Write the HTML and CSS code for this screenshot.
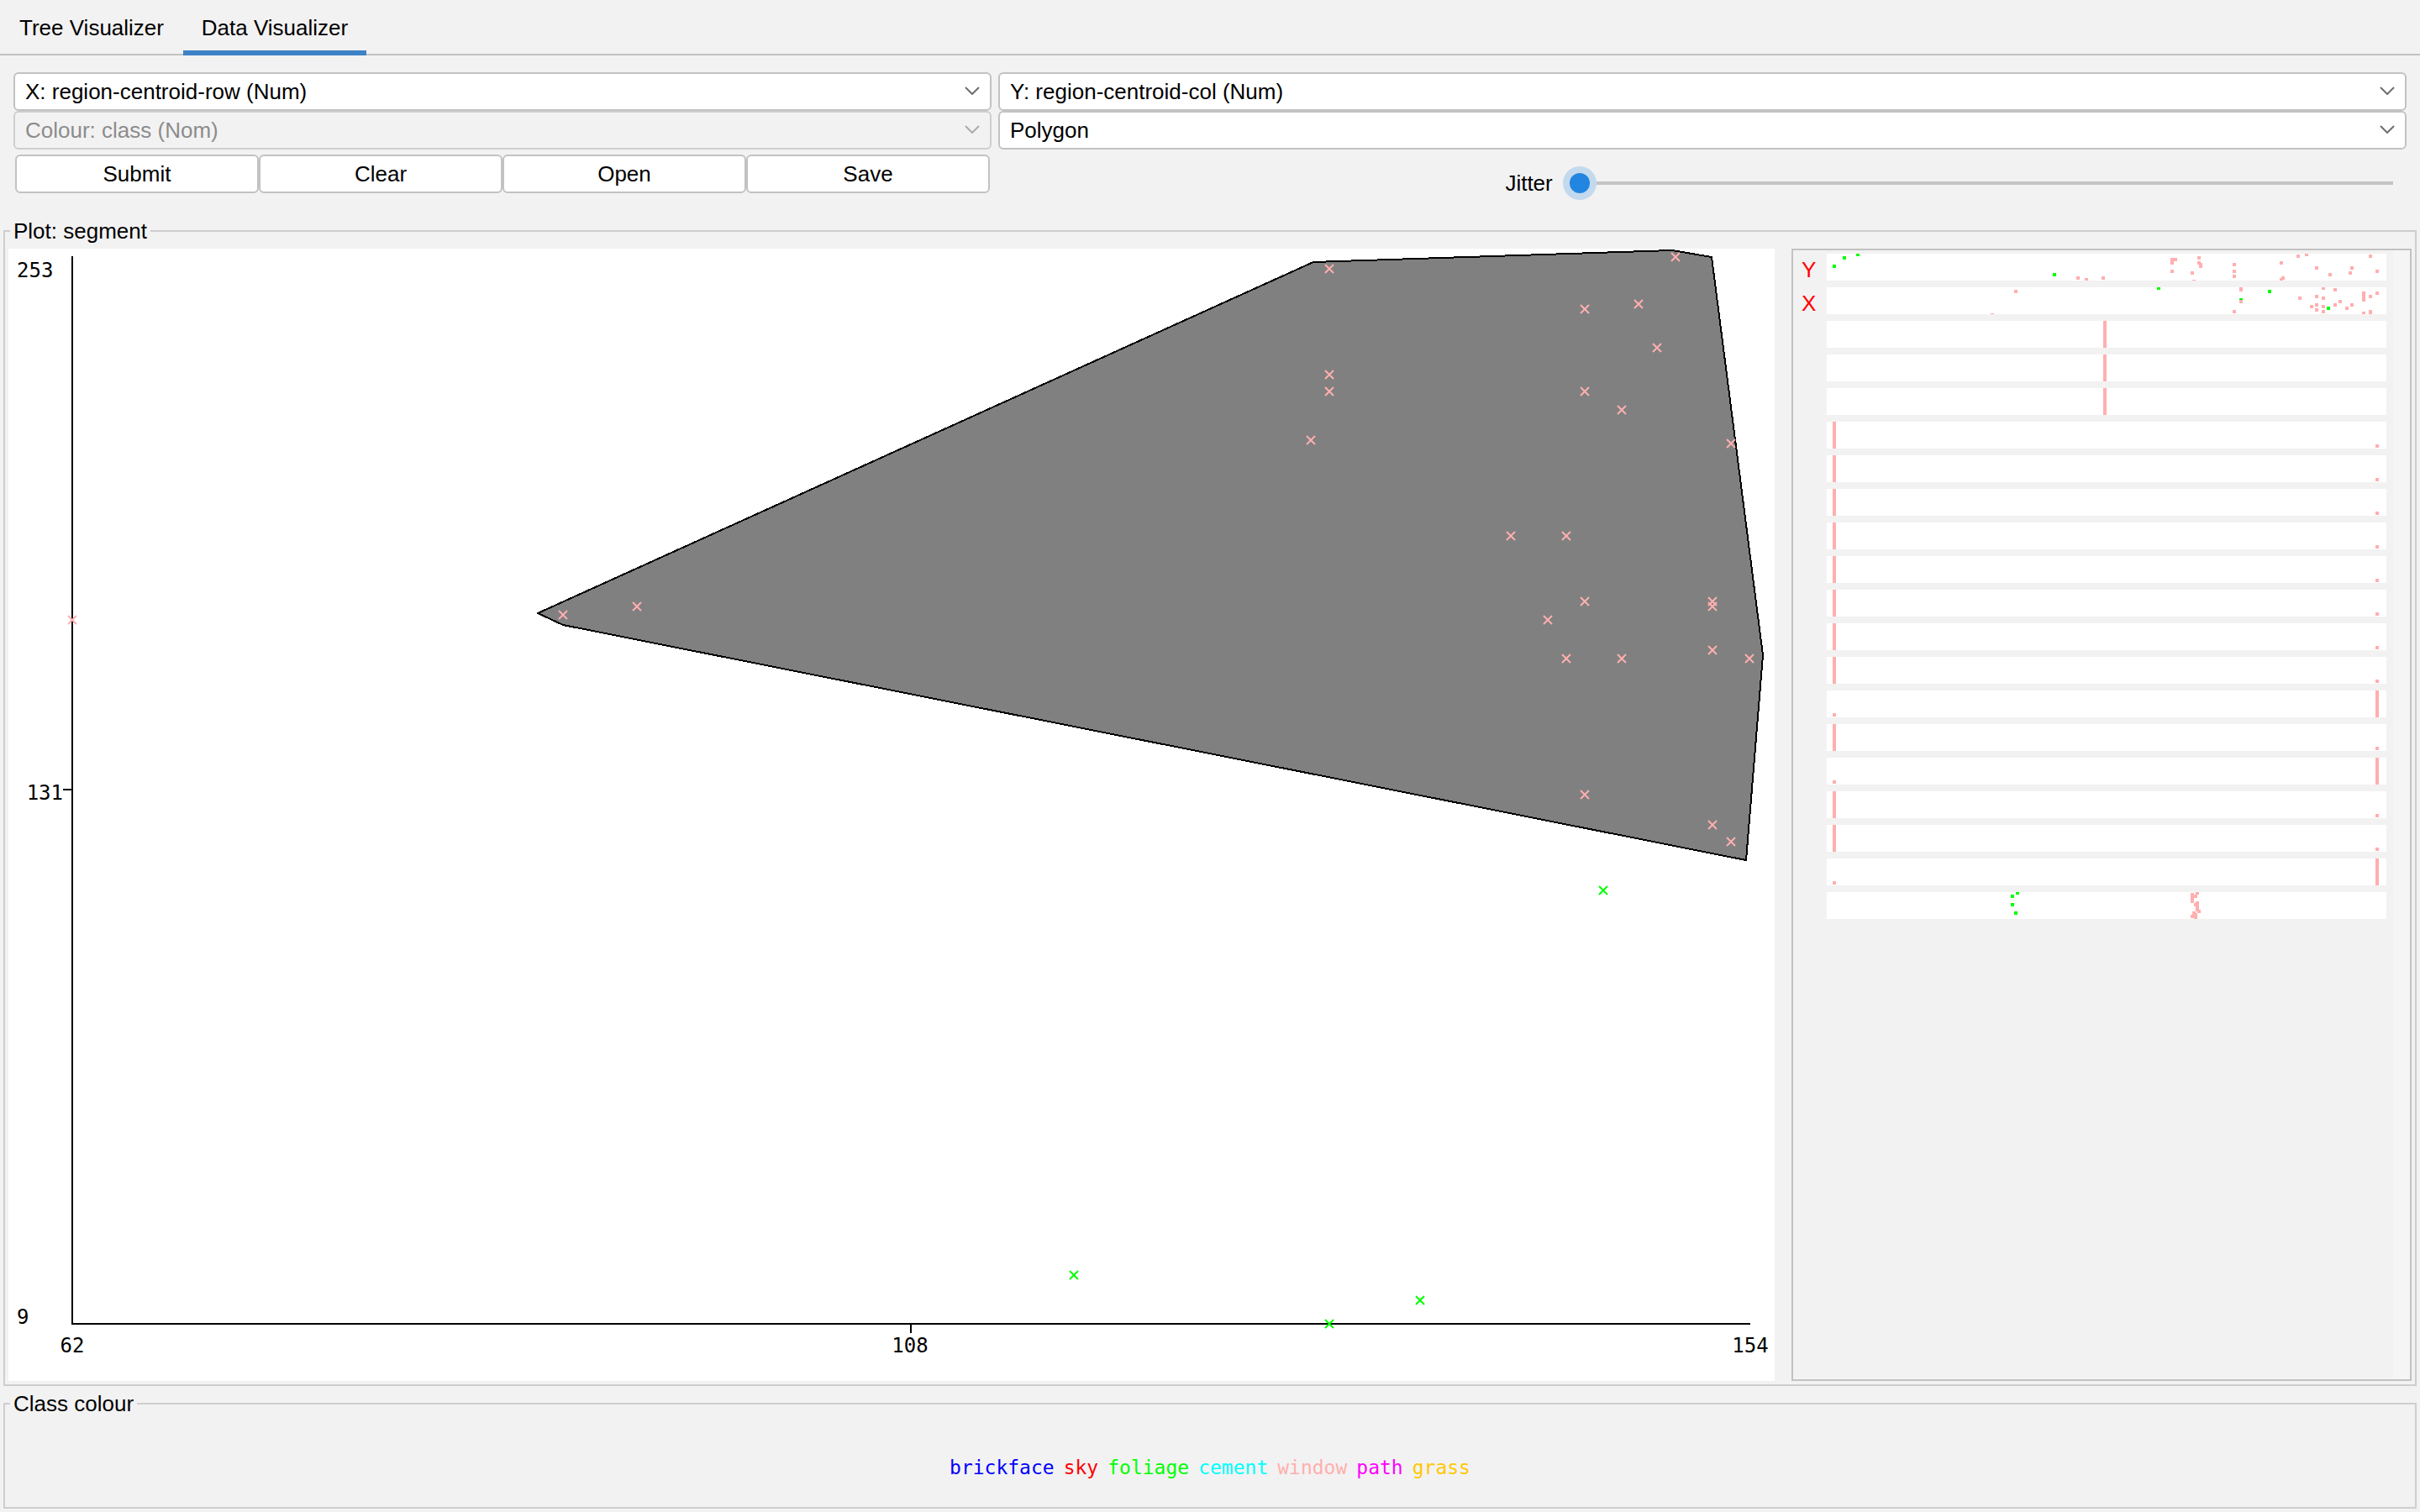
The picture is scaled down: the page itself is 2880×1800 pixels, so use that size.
FILE: index.html
```html
<!DOCTYPE html>
<html lang="en">
<head>
<meta charset="utf-8">
<title>Data Visualizer</title>
<link rel="stylesheet" href="styles.css">
</head>
<body>
<nav class="tabs" role="tablist">
  <button class="tab" role="tab" aria-selected="false">Tree Visualizer</button>
  <button class="tab tab-active" role="tab" aria-selected="true">Data Visualizer</button>
</nav>

<main>
  <form class="controls">
    <div class="control-column">
      <div class="combo">
        <select aria-label="X axis attribute"><option>X: region-centroid-row (Num)</option></select>
        <svg class="chevron" viewBox="0 0 18 10"><path d="M1 1l8 8 8-8"/></svg>
      </div>
      <div class="combo combo-disabled">
        <select aria-label="Colour attribute" disabled><option>Colour: class (Nom)</option></select>
        <svg class="chevron" viewBox="0 0 18 10"><path d="M1 1l8 8 8-8"/></svg>
      </div>
      <div class="buttons">
        <button type="button">Submit</button>
        <button type="button">Clear</button>
        <button type="button">Open</button>
        <button type="button">Save</button>
      </div>
    </div>
    <div class="control-column">
      <div class="combo">
        <select aria-label="Y axis attribute"><option>Y: region-centroid-col (Num)</option></select>
        <svg class="chevron" viewBox="0 0 18 10"><path d="M1 1l8 8 8-8"/></svg>
      </div>
      <div class="combo">
        <select aria-label="Selection shape"><option>Polygon</option></select>
        <svg class="chevron" viewBox="0 0 18 10"><path d="M1 1l8 8 8-8"/></svg>
      </div>
      <div class="jitter">
        <label for="jitter">Jitter</label>
        <input type="range" id="jitter" min="0" max="50" value="0">
      </div>
    </div>
  </form>

  <fieldset class="group">
    <legend>Plot: segment</legend>
    <div class="plot-layout">
      <svg class="plot" viewBox="10 296 2102 1348" role="img" aria-label="Scatter plot">
        <defs><path id="cross" d="M-5-5L5 5M-5 5L5-5"/></defs>
        <polygon class="selection" points="640,730 1563,312 1990,298 2037,306 2098,780 2078,1024 670,744"/>
        <path class="axis" d="M86 305V1576H2083M75 940H86M1084 1576V1587"/>
        <g class="axis-label">
          <text x="20" y="330">253</text>
          <text x="75" y="952" text-anchor="end">131</text>
          <text x="20" y="1576">9</text>
          <text x="86" y="1610" text-anchor="middle">62</text>
          <text x="1083" y="1610" text-anchor="middle">108</text>
          <text x="2083" y="1610" text-anchor="middle">154</text>
        </g>
        <g class="mark window">
          <use href="#cross" x="86" y="738"/><use href="#cross" x="670" y="732"/>
          <use href="#cross" x="758" y="722"/><use href="#cross" x="1582" y="320"/>
          <use href="#cross" x="1994" y="306"/><use href="#cross" x="1886" y="368"/>
          <use href="#cross" x="1950" y="362"/><use href="#cross" x="1972" y="414"/>
          <use href="#cross" x="1582" y="446"/><use href="#cross" x="1582" y="466"/>
          <use href="#cross" x="1886" y="466"/><use href="#cross" x="1930" y="488"/>
          <use href="#cross" x="1560" y="524"/><use href="#cross" x="2060" y="528"/>
          <use href="#cross" x="1798" y="638"/><use href="#cross" x="1864" y="638"/>
          <use href="#cross" x="1886" y="716"/><use href="#cross" x="2038" y="716"/>
          <use href="#cross" x="2038" y="722"/><use href="#cross" x="1842" y="738"/>
          <use href="#cross" x="2038" y="774"/><use href="#cross" x="1864" y="784"/>
          <use href="#cross" x="1930" y="784"/><use href="#cross" x="2082" y="784"/>
          <use href="#cross" x="1886" y="946"/><use href="#cross" x="2038" y="982"/>
          <use href="#cross" x="2060" y="1002"/>
        </g>
        <g class="mark foliage">
          <use href="#cross" x="1908" y="1060"/><use href="#cross" x="1278" y="1518"/>
          <use href="#cross" x="1690" y="1548"/><use href="#cross" x="1582" y="1576"/>
        </g>
      </svg>

      <div class="attributes">
        <ul class="attribute-list">
          <li><span class="axis-tag">Y</span>
            <svg class="strip" viewBox="0 0 666 32">
              <path class="foliage" d="M9 13v4M21 3v4M37-1v4M271 23v4"/>
              <path class="window" d="M299 27v4M309 29v4M329 27v4M411 5v8M415 5v4M411 19v4M435 21v4M437 31v4M443 3v4M443 9v4M445 11v6M485 11v4M485 19v4M485 25v4M541 9v4M543 27v4M541 29v4M561 1v4M571-1v4M583 15v4M599 23v4M623 21v4M625 15v4M647 1v4M655 19v4"/>
            </svg></li>
          <li><span class="axis-tag">X</span>
            <svg class="strip" viewBox="0 0 666 32">
              <path class="foliage" d="M395-1v4M493 13v2M527 3v4M597 23v4"/>
              <path class="window" d="M225 3v4M197 31v4M493-1v6M493 15v4M485 27v4M563 11v4M583 9v4M591-1v4M591 11v4M605 1v4M611 15v4M583 19v4M577 21v4M591 21v4M583 25v4M591 27v4M605 19v4M619 23v4M625 19v4M639 5v12M639 29v4M647 9v4M647 27v5M655 5v4"/>
            </svg></li>
          <li><svg class="strip" viewBox="0 0 666 32"><path class="window" d="M331 0v32"/></svg></li>
          <li><svg class="strip" viewBox="0 0 666 32"><path class="window" d="M331 0v32"/></svg></li>
          <li><svg class="strip" viewBox="0 0 666 32"><path class="window" d="M331 0v32"/></svg></li>
          <li><svg class="strip" viewBox="0 0 666 32"><path class="window" d="M9 0v32M655 27v4"/></svg></li>
          <li><svg class="strip" viewBox="0 0 666 32"><path class="window" d="M9 0v32M655 27v4"/></svg></li>
          <li><svg class="strip" viewBox="0 0 666 32"><path class="window" d="M9 0v32M655 27v4"/></svg></li>
          <li><svg class="strip" viewBox="0 0 666 32"><path class="window" d="M9 0v32M655 27v4"/></svg></li>
          <li><svg class="strip" viewBox="0 0 666 32"><path class="window" d="M9 0v32M655 27v4"/></svg></li>
          <li><svg class="strip" viewBox="0 0 666 32"><path class="window" d="M9 0v32M655 27v4"/></svg></li>
          <li><svg class="strip" viewBox="0 0 666 32"><path class="window" d="M9 0v32M655 27v4"/></svg></li>
          <li><svg class="strip" viewBox="0 0 666 32"><path class="window" d="M9 0v32M655 27v4"/></svg></li>
          <li><svg class="strip" viewBox="0 0 666 32"><path class="window" d="M655 0v32M9 27v4"/></svg></li>
          <li><svg class="strip" viewBox="0 0 666 32"><path class="window" d="M9 0v32M655 27v4"/></svg></li>
          <li><svg class="strip" viewBox="0 0 666 32"><path class="window" d="M655 0v32M9 27v4"/></svg></li>
          <li><svg class="strip" viewBox="0 0 666 32"><path class="window" d="M9 0v32M655 27v4"/></svg></li>
          <li><svg class="strip" viewBox="0 0 666 32"><path class="window" d="M9 0v32M655 27v4"/></svg></li>
          <li><svg class="strip" viewBox="0 0 666 32"><path class="window" d="M655 0v32M9 27v4"/></svg></li>
          <li><svg class="strip" viewBox="0 0 666 32">
              <path class="foliage" d="M221 3v4M227-1v4M221 13v4M225 23v4"/>
              <path class="window" d="M441-1v4M435 1v12M439 3v4M441 11v12M439 13v4M443 21v4M437 23v4M439 25v7M435 27v4"/>
            </svg></li>
        </ul>
        <div class="scroll-track"></div>
      </div>
    </div>
  </fieldset>

  <fieldset class="group group-classes">
    <legend>Class colour</legend>
    <div class="classes">
      <span class="brickface">brickface</span>
      <span class="sky">sky</span>
      <span class="foliage">foliage</span>
      <span class="cement">cement</span>
      <span class="window">window</span>
      <span class="path">path</span>
      <span class="grass">grass</span>
    </div>
  </fieldset>
</main>
</body>
</html>
```
FILE: styles.css
```css
* { box-sizing: border-box; }

body {
  margin: 0;
  background: #f2f2f2;
  color: #000;
  font: 26px/30px "Liberation Sans", Arial, sans-serif;
}

button, select, input { font: inherit; color: inherit; margin: 0; }

/* class colours, used by text and by plotted marks */
.brickface { color: #0000ff; }
.sky { color: #ff0000; }
.foliage { color: #00ff00; }
.cement { color: #00ffff; }
.window { color: #ffafaf; }
.path { color: #ff00ff; }
.grass { color: #ffc800; }

/* tabs */
.tabs {
  display: flex;
  height: 66px;
  background: linear-gradient(#c2c2c2, #c2c2c2) bottom / 100% 2px no-repeat;
}
.tab {
  width: 218px;
  padding: 6px 0 0;
  border: 0;
  border-bottom: 6px solid transparent;
  background: none;
  white-space: nowrap;
}
.tab-active { border-bottom-color: #3d82c6; }

/* controls */
.controls {
  display: grid;
  grid-template-columns: 1164fr 1676fr;
  gap: 8px;
  padding: 20px 16px 0;
}
.control-column { display: flex; flex-direction: column; }
.combo { position: relative; height: 46px; }
.combo select {
  appearance: none;
  width: 100%;
  height: 100%;
  padding: 0 40px 0 12px;
  border: 2px solid #c2c2c2;
  border-radius: 6px;
  background: #fff;
}
.combo-disabled select {
  border-color: #cecece;
  background: #f2f2f2;
  color: #8c8c8c;
  opacity: 1;
}
.chevron {
  position: absolute;
  top: 17px;
  right: 14px;
  width: 18px;
  height: 10px;
  fill: none;
  stroke: #6e6e6e;
  stroke-width: 2;
  pointer-events: none;
}
.combo-disabled .chevron { stroke: #ababab; }

.buttons {
  display: grid;
  grid-template-columns: repeat(4, 1fr);
  margin-top: 6px;
  padding: 0 2px;
}
.buttons button {
  height: 46px;
  padding: 0;
  border: 2px solid #c2c2c2;
  border-radius: 6px;
  background: #fff;
}

.jitter {
  display: flex;
  align-items: center;
  align-self: flex-end;
  gap: 20px;
  width: 64%;
  height: 68px;
  margin-top: 6px;
  padding-right: 16px;
}
.jitter input {
  appearance: none;
  flex: 1;
  height: 24px;
  background: linear-gradient(#c4c4c4, #c4c4c4) center / 100% 4px no-repeat;
}
.jitter input::-webkit-slider-thumb {
  appearance: none;
  width: 24px;
  height: 24px;
  border-radius: 50%;
  background: #2285e1;
  box-shadow: 0 0 0 8px #c3d9ee;
}

/* titled groups */
.group {
  min-width: 0;
  margin: 8px 4px 0;
  padding: 6px 4px 4px;
  border: 2px solid #cecece;
}
.group legend { margin-left: 2px; padding: 0 4px; }
.group-classes { margin: 6px 4px 4px; }

.plot-layout {
  display: grid;
  grid-template-columns: 2102fr 738fr;
  gap: 20px;
}
.plot { display: block; width: 100%; background: #fff; }
.selection { fill: #808080; stroke: #000; stroke-width: 2; shape-rendering: crispEdges; }
.axis { fill: none; stroke: #000; stroke-width: 2; shape-rendering: crispEdges; }
.axis-label { font: 24px "DejaVu Sans Mono", monospace; }
.mark { stroke: currentColor; stroke-width: 2; }

.attributes {
  display: flex;
  border: 2px solid #c2c2c2;
}
.attribute-list {
  flex: 1;
  display: flex;
  flex-direction: column;
  gap: 8px;
  margin: 0;
  padding: 4px 8px 0 0;
  list-style: none;
}
.attribute-list li {
  display: grid;
  grid-template-columns: 40px 1fr;
  height: 32px;
}
.axis-tag { padding-left: 10px; color: #ff0000; line-height: 38px; }
.strip {
  grid-column: 2;
  display: block;
  width: 100%;
  height: 32px;
  background: #fff;
  shape-rendering: crispEdges;
}
.strip path { fill: none; stroke: currentColor; stroke-width: 4; }
.scroll-track { width: 20px; background: #f5f5f5; }

.classes {
  display: flex;
  justify-content: center;
  gap: 11px;
  padding: 40px 0 28px;
  font: 23px/30px "DejaVu Sans Mono", monospace;
}
```
